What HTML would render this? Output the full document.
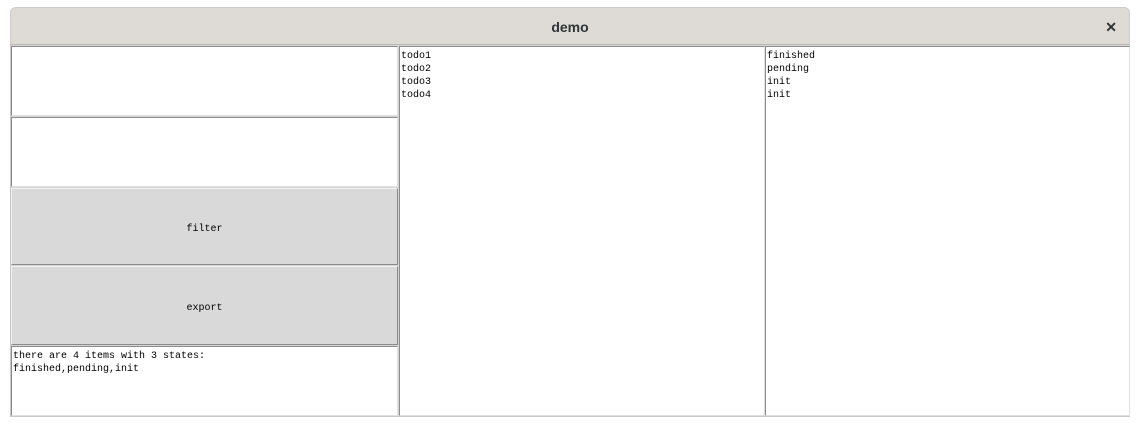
<!DOCTYPE html>
<html><head><style>
body{margin:0;width:1140px;height:426px;background:#fff;position:relative;overflow:hidden;font-family:"Liberation Mono",monospace;}
.win{position:absolute;left:10px;top:7px;width:1120px;height:410px;background:#d6d6d6;border-radius:6px 6px 0 0;border:1px solid #c8c8c8;box-sizing:border-box;}
.title{position:absolute;left:10px;top:7px;width:1120px;height:38px;background:#dedbd7;border-radius:6px 6px 0 0;border:1px solid #cfcccb;border-bottom:1px solid #b8b6b3;box-sizing:border-box;text-align:center;font:bold 14px "Liberation Sans",sans-serif;line-height:38px;color:#2e3436;}
.x{position:absolute;right:12px;top:0;font-size:14px;font-weight:bold;}
.box{position:absolute;background:#fff;border:1px solid #8c8c8c;border-right-color:#e0e0e0;border-bottom-color:#e0e0e0;box-sizing:border-box;font-size:10px;line-height:13px;padding:3px 0 0 1px;white-space:pre;color:#000;}
.btn{position:absolute;background:#d9d9d9;border:1px solid #f2f2f2;border-right-color:#8a8a8a;border-bottom-color:#8a8a8a;box-sizing:border-box;font-size:10px;display:flex;align-items:center;justify-content:center;padding-top:5px;}
</style></head><body>
<div class="win"></div>
<div class="title">demo<span class="x">✕</span></div>
<div class="box" style="left:11px;top:46px;width:387px;height:70px"></div>
<div class="box" style="left:11px;top:117px;width:387px;height:70px"></div>
<div class="btn" style="left:11px;top:188px;width:387px;height:77px">filter</div>
<div class="btn" style="left:11px;top:266px;width:387px;height:79px">export</div>
<div class="box" style="left:11px;top:346px;width:387px;height:70px">there are 4 items with 3 states:
finished,pending,init</div>
<div class="box" style="left:399px;top:46px;width:366px;height:370px">todo1
todo2
todo3
todo4</div>
<div class="box" style="left:765px;top:46px;width:365px;height:370px">finished
pending
init
init</div>
</body></html>
